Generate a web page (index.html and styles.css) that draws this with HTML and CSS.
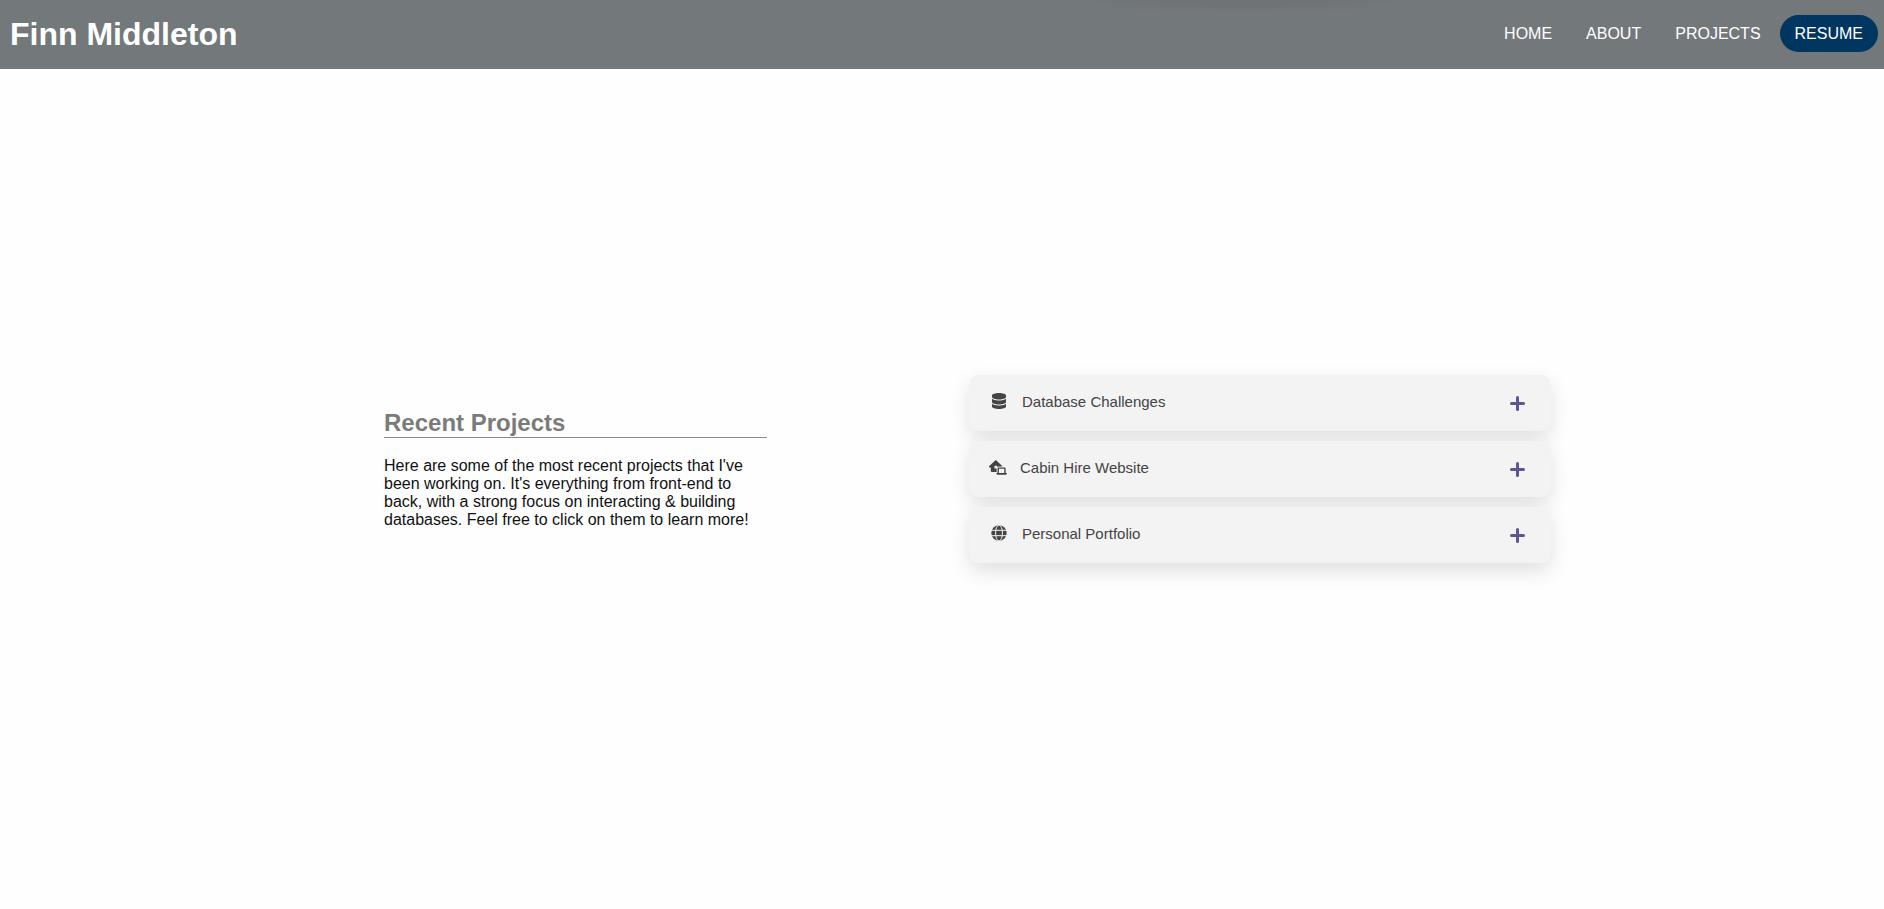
FILE: index.html
```html
<!DOCTYPE html>
<html lang="en">
<head>
<meta charset="utf-8">
<title>Finn Middleton</title>
<link rel="stylesheet" href="styles.css">
</head>
<body>
<header class="header">
  <h1 class="brand">Finn Middleton</h1>
  <nav class="nav">
    <a class="nav-link" href="#home">HOME</a>
    <a class="nav-link" href="#about">ABOUT</a>
    <a class="nav-link" href="#projects">PROJECTS</a>
    <a class="nav-link nav-link-resume" href="#resume">RESUME</a>
  </nav>
</header>
<main class="projects" id="projects">
  <section class="intro">
    <h2 class="intro-title">Recent Projects</h2>
    <p class="intro-text">Here are some of the most recent projects that I've been working on. It's everything from front-end to back, with a strong focus on interacting &amp; building databases. Feel free to click on them to learn more!</p>
  </section>
  <div class="accordion">
    <button class="card" type="button" aria-expanded="false">
      <span class="card-icon card-icon-wide"><svg width="14" height="16" viewBox="0 0 448 512" fill="currentColor" aria-hidden="true"><path d="M448 80v48c0 44.200-100.300 80-224 80S0 172.200 0 128V80C0 35.800 100.300 0 224 0s224 35.800 224 80zM393.200 214.700c20.800-7.400 39.900-16.900 54.800-28.600V288c0 44.200-100.300 80-224 80S0 332.200 0 288V186.100c14.900 11.800 34 21.200 54.800 28.600C99.700 230.700 159.500 240 224 240s124.300-9.300 169.200-25.300zM0 346.100c14.900 11.800 34 21.200 54.800 28.600C99.700 390.700 159.500 400 224 400s124.300-9.300 169.200-25.300c20.800-7.400 39.900-16.900 54.800-28.600V432c0 44.200-100.300 80-224 80S0 476.200 0 432v-85.900z"/></svg></span>
      <span class="card-title">Database Challenges</span>
      <svg class="plus" width="15" height="15" viewBox="0 0 15 15" aria-hidden="true"><path d="M7.500 1.500v12M1.500 7.500h12"/></svg>
    </button>
    <button class="card" type="button" aria-expanded="false">
      <span class="card-icon"><svg width="19" height="15" viewBox="0 0 640 512" fill="currentColor" aria-hidden="true"><path d="M218.300 8.500c12.300-11.300 31.200-11.300 43.400 0l208 192c6.700 6.200 10.300 14.800 10.300 23.500H336c-19.100 0-36.300 8.400-48 21.700V208c0-8.800-7.200-16-16-16h-64c-8.800 0-16 7.200-16 16v64c0 8.800 7.200 16 16 16h64v128H112c-26.500 0-48-21.500-48-48V256H32c-13.200 0-25-8.100-29.800-20.300s-1.600-26.200 8.100-35.200l208-192zM352 304v144h192V304H352zm-48-16c0-17.700 14.300-32 32-32h224c17.700 0 32 14.300 32 32v160h32c8.800 0 16 7.200 16 16 0 26.500-21.500 48-48 48H304c-26.500 0-48-21.500-48-48 0-8.800 7.200-16 16-16h32V288z"/></svg></span>
      <span class="card-title">Cabin Hire Website</span>
      <svg class="plus" width="15" height="15" viewBox="0 0 15 15" aria-hidden="true"><path d="M7.500 1.500v12M1.500 7.500h12"/></svg>
    </button>
    <button class="card" type="button" aria-expanded="false">
      <span class="card-icon card-icon-wide"><svg width="16" height="16" viewBox="0 0 16 16" aria-hidden="true"><circle cx="8" cy="8" r="7.700" fill="currentColor"/><g class="globe-lines"><path d="M0 5.300h16M0 10.700h16"/><ellipse cx="8" cy="8" rx="3.400" ry="8"/></g></svg></span>
      <span class="card-title">Personal Portfolio</span>
      <svg class="plus" width="15" height="15" viewBox="0 0 15 15" aria-hidden="true"><path d="M7.500 1.500v12M1.500 7.500h12"/></svg>
    </button>
  </div>
</main>
</body>
</html>
```
FILE: styles.css
```css
* {
  box-sizing: border-box;
}

body {
  margin: 0;
  background: #fefefe;
  color: #111;
  font-family: "Liberation Sans", Arial, sans-serif;
  font-size: 16px;
  line-height: 18px;
}

.header {
  display: flex;
  align-items: center;
  justify-content: space-between;
  min-height: 69px;
  padding: 0 6px 2px 10px;
  background: radial-gradient(170px 14px at 66% 0, #6f7376 40%, #73787b 100%);
}

.brand {
  margin: 0;
  color: #fff;
  font-size: 32px;
  line-height: 36px;
}

.nav {
  display: flex;
  gap: 4px;
}

.nav-link {
  padding: 10px 15px 9px;
  border-radius: 20px;
  color: #fff;
  text-decoration: none;
}

.nav-link-resume {
  background: #003660;
}

.projects {
  display: grid;
  grid-template-columns: 383fr 582fr;
  column-gap: 202px;
  align-items: center;
  min-height: calc(100vh - 69px);
  padding: 0 333px 40px 384px;
}

.intro-title {
  margin: 0 0 19px;
  border-bottom: 1px solid #888;
  color: #7b7b7b;
  font-size: 24px;
  line-height: 28px;
}

.intro-text {
  margin: 0;
}

.accordion {
  display: grid;
  gap: 10px;
}

.card {
  display: flex;
  align-items: center;
  width: 100%;
  height: 56px;
  padding: 0 26px 4px 20px;
  border: 0;
  border-radius: 10px;
  background: #f3f3f3;
  box-shadow: 0 8px 20px rgba(0, 0, 0, 0.12);
  color: #444;
  font-family: inherit;
  font-size: 15px;
  text-align: left;
  cursor: pointer;
}

.card-icon {
  display: flex;
  flex: none;
  justify-content: center;
  width: 18px;
  margin-right: 13px;
}

.card-icon-wide {
  width: 20px;
}

.card-title {
  flex: 1;
}

.plus {
  margin-top: 4px;
  fill: none;
  stroke: #5f5592;
  stroke-width: 3;
  stroke-linecap: round;
}

.globe-lines {
  fill: none;
  stroke: #f3f3f3;
  stroke-width: 1;
}
```
